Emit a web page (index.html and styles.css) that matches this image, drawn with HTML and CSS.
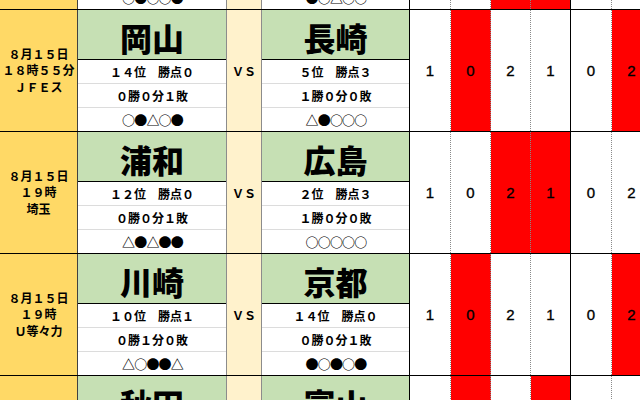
FILE: index.html
```html
<!DOCTYPE html>
<html lang="ja">
<head>
<meta charset="utf-8">
<title>試合予想</title>
<link rel="stylesheet" href="styles.css">
</head>
<body>
<div class="sheet">
  <div class="match tail">
    <div class="date"></div>
    <div class="team left"><div class="stat form">○●○○●</div></div>
    <div class="vs"></div>
    <div class="team right"><div class="stat form">●○△○○</div></div>
    <div class="score"></div>
    <div class="score"></div>
    <div class="score red"></div>
    <div class="score red solid"></div>
    <div class="score"></div>
    <div class="score"></div>
  </div>

  <div class="match">
    <div class="date">８月１５日<br>１８時５５分<br>ＪＦＥス</div>
    <div class="team left">
      <div class="name">岡山</div>
      <div class="stat">１４位　勝点０</div>
      <div class="stat">０勝０分１敗</div>
      <div class="stat form">○●△○●</div>
    </div>
    <div class="vs">ＶＳ</div>
    <div class="team right">
      <div class="name">長崎</div>
      <div class="stat">５位　勝点３</div>
      <div class="stat">１勝０分０敗</div>
      <div class="stat form">△●○○○</div>
    </div>
    <div class="score">1</div>
    <div class="score red">0</div>
    <div class="score">2</div>
    <div class="score solid">1</div>
    <div class="score">0</div>
    <div class="score red">2</div>
  </div>

  <div class="match">
    <div class="date">８月１５日<br>１９時<br>埼玉</div>
    <div class="team left">
      <div class="name">浦和</div>
      <div class="stat">１２位　勝点０</div>
      <div class="stat">０勝０分１敗</div>
      <div class="stat form">△●△●●</div>
    </div>
    <div class="vs">ＶＳ</div>
    <div class="team right">
      <div class="name">広島</div>
      <div class="stat">２位　勝点３</div>
      <div class="stat">１勝０分０敗</div>
      <div class="stat form">○○○○○</div>
    </div>
    <div class="score">1</div>
    <div class="score">0</div>
    <div class="score red">2</div>
    <div class="score red solid">1</div>
    <div class="score">0</div>
    <div class="score">2</div>
  </div>

  <div class="match">
    <div class="date">８月１５日<br>１９時<br>Ｕ等々力</div>
    <div class="team left">
      <div class="name">川崎</div>
      <div class="stat">１０位　勝点１</div>
      <div class="stat">０勝１分０敗</div>
      <div class="stat form">△○●●△</div>
    </div>
    <div class="vs">ＶＳ</div>
    <div class="team right">
      <div class="name">京都</div>
      <div class="stat">１４位　勝点０</div>
      <div class="stat">０勝０分１敗</div>
      <div class="stat form">●○●○●</div>
    </div>
    <div class="score">1</div>
    <div class="score red">0</div>
    <div class="score">2</div>
    <div class="score solid">1</div>
    <div class="score">0</div>
    <div class="score red">2</div>
  </div>

  <div class="match">
    <div class="date"></div>
    <div class="team left">
      <div class="name">秋田</div>
      <div class="stat"></div>
      <div class="stat"></div>
      <div class="stat"></div>
    </div>
    <div class="vs"></div>
    <div class="team right">
      <div class="name">富山</div>
      <div class="stat"></div>
      <div class="stat"></div>
      <div class="stat"></div>
    </div>
    <div class="score"></div>
    <div class="score red"></div>
    <div class="score"></div>
    <div class="score red solid"></div>
    <div class="score"></div>
    <div class="score"></div>
  </div>
</div>
</body>
</html>
```

FILE: styles.css
```css
* {
  box-sizing: border-box;
  margin: 0;
  padding: 0;
}

html,
body {
  width: 640px;
  height: 400px;
  overflow: hidden;
  background: #ffffff;
}

body {
  font-family: "Noto Sans CJK JP", "Noto Sans", sans-serif;
  color: #000000;
}

.sheet {
  width: 652px;
}

.match {
  display: grid;
  grid-template-columns: 78px 149px 35px 148px 41px 40px 40px 40px 41px 40px;
  border-bottom: 1px solid #000000;
}

.date {
  background: #ffd966;
  border-right: 1px solid #404040;
  display: flex;
  align-items: center;
  justify-content: center;
  text-align: center;
  font-size: 12px;
  font-weight: 700;
  line-height: 16.5px;
}

.team {
  display: grid;
  grid-template-rows: 50px 24px 24px 23px;
}

.team.left {
  border-right: 1px solid #8c8c8c;
}

.team.right {
  border-right: 1px solid #000000;
}

.name {
  background: #c6e0b4;
  border-bottom: 1px solid #000000;
  display: flex;
  align-items: center;
  justify-content: center;
  font-size: 32px;
  font-weight: 900;
  line-height: 1;
  padding-top: 5px;
}

.stat {
  display: flex;
  align-items: center;
  justify-content: center;
  font-size: 12px;
  font-weight: 700;
  line-height: 1;
  border-bottom: 1px solid #dcdcdc;
}

.stat.form {
  font-size: 13px;
  letter-spacing: -0.8px;
  padding-left: 1px;
}

.stat:last-child {
  border-bottom: none;
}

.vs {
  background: #fff2cc;
  border-right: 1px solid #8c8c8c;
  display: flex;
  align-items: center;
  justify-content: center;
  font-size: 12px;
  font-weight: 700;
}

.score {
  border-right: 1px dotted #8a8a8a;
  display: flex;
  align-items: center;
  justify-content: center;
  font-family: "Liberation Sans", Arial, sans-serif;
  font-size: 15px;
  -webkit-text-stroke: 0.35px #000000;
}

.score.solid {
  border-right: 1px solid #000000;
}

.score.red {
  background: #ff0000;
}

/* partial row at the top: only the bottom edge of the previous match shows */
.match.tail {
  height: 10px;
}

.tail .team {
  display: block;
  overflow: hidden;
}

.tail .stat {
  height: 23px;
  margin-top: -14px;
  border-bottom: none;
}
```
